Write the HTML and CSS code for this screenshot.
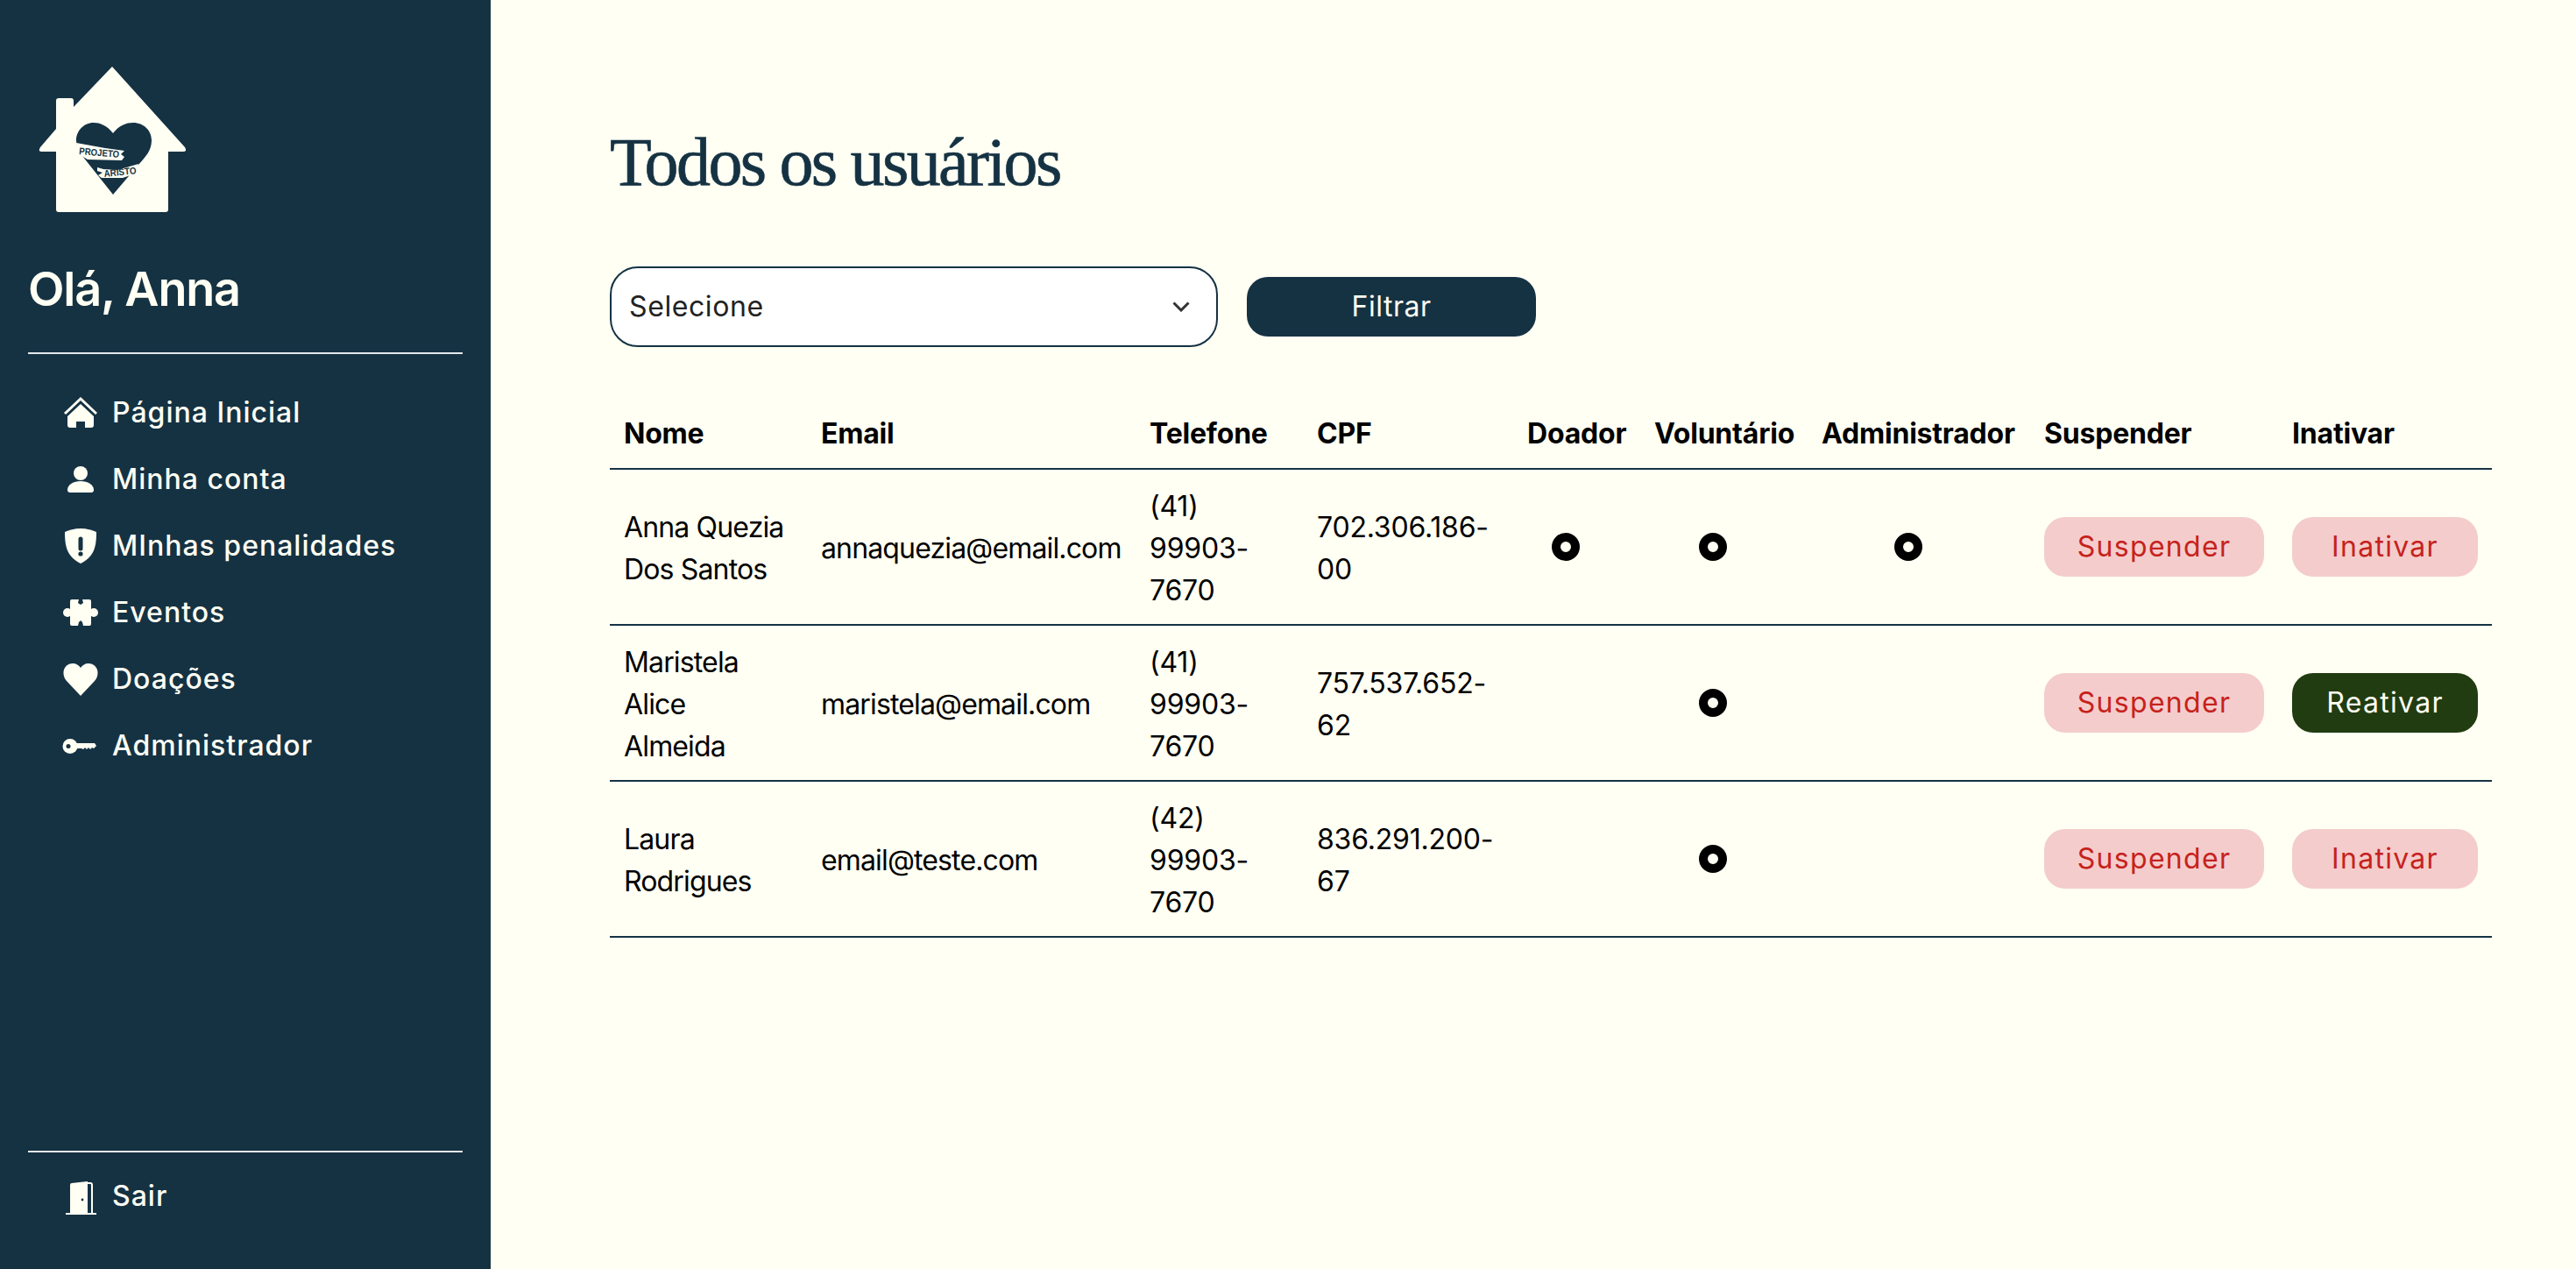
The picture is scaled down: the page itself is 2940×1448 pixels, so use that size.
FILE: index.html
```html
<!DOCTYPE html>
<html lang="pt-BR">
<head>
<meta charset="utf-8">
<title>Todos os usuários</title>
<link rel="stylesheet" href="styles.css">
</head>
<body>
<aside class="sidebar">
  <svg class="logo" viewBox="0 0 168 166" aria-label="Logo">
    <path class="cream" d="M84 0 L167 92 Q170 97 165 97 H148 V163 Q148 166 145 166 H23 Q20 166 20 163 V97 H3 Q-1 97 2 92 L20 71 V39 Q20 36 23 36 H37 Q40 36 40 39 V46 Z"/>
    <path class="navy" d="M85 76 C78 67 70 64 63 64 C51 64 43 74 43 84 C43 94 50 102 58 112 L85 146 L114 112 C122 103 129 96 129 84 C129 73 120 64 108 64 C100 64 92 67 85 76 Z"/>
    <path class="cream" d="M43 87 L76 93 L98 96 L94 100 L98 103 L95 107 L56 106 L44 99 Z"/>
    <path class="cream" d="M67 115 L74 117 L90 118 L114 111 L111 122 L96 127 L72 127 L68 124 L73 121 L67 119 Z"/>
    <text class="logo-text" x="46" y="100" textLength="46" lengthAdjust="spacingAndGlyphs" transform="rotate(5 46 100)">PROJETO</text>
    <text class="logo-text" x="75" y="126" textLength="37" lengthAdjust="spacingAndGlyphs" transform="rotate(-6 75 126)">ARISTO</text>
  </svg>
  <h2 class="greeting">Olá, Anna</h2>
  <nav class="nav">
    <a class="nav-item">
      <svg class="icon" viewBox="0 0 40 40"><path class="roof" d="M2 21 L20 4 L38 21"/><path class="cream" d="M20 10 L35 24 V34 Q35 37 32 37 H25 V30 H15 V37 H8 Q5 37 5 34 V24 Z"/></svg>
      <span>Página Inicial</span>
    </a>
    <a class="nav-item">
      <svg class="icon" viewBox="0 0 40 40"><circle class="cream" cx="20" cy="13" r="8"/><path class="cream" d="M5 32 C5 26 12 22 20 22 C28 22 35 26 35 32 Q35 35 32 35 H8 Q5 35 5 32 Z"/></svg>
      <span>Minha conta</span>
    </a>
    <a class="nav-item">
      <svg class="icon" viewBox="0 0 40 40"><path class="cream" d="M20 0 C27 0 33 2 38 4 C38 20 36 32 20 40 C4 32 2 20 2 4 C7 2 13 0 20 0 Z"/><path class="mark" d="M20 12 V23"/><circle class="navy" cx="20" cy="29" r="2.6"/></svg>
      <span>MInhas penalidades</span>
    </a>
    <a class="nav-item">
      <svg class="icon" viewBox="0 0 40 40"><rect class="cream" x="8" y="5" width="24" height="30" rx="2"/><circle class="cream" cx="5" cy="20" r="5"/><circle class="cream" cx="35" cy="20" r="5"/><path class="navy" d="M18 5 H22 L23 9 L20 11 L17 9 Z"/><path class="navy" d="M17 35 L18 31 L20 29 L22 31 L23 35 Z"/></svg>
      <span>Eventos</span>
    </a>
    <a class="nav-item">
      <svg class="icon" viewBox="0 0 40 40"><path class="cream" d="M20 39 L4 22 C-3 14 1 2 11 2 C15 2 18 4 20 7 C22 4 25 2 29 2 C39 2 43 14 36 22 Z"/></svg>
      <span>Doações</span>
    </a>
    <a class="nav-item">
      <svg class="icon" viewBox="0 0 40 40"><circle class="cream" cx="8" cy="20.5" r="8.5"/><path class="cream" d="M14 17 H36 L38 20 L35 23 L33 22 L31 24 L29 22 L27 24 L25 22 L23 24 L21 23 H14 Z"/><circle class="navy" cx="6" cy="20.5" r="2.5"/></svg>
      <span>Administrador</span>
    </a>
  </nav>
  <div class="sidebar-footer">
    <a class="nav-item">
      <svg class="icon" viewBox="0 0 40 40"><path class="cream" d="M8 7 Q8 5 10 5 L28 3 V39 H8 Z"/><path class="door-frame" d="M28 5 H31 Q33 5 33 7 V40"/><path class="door-floor" d="M3 40 H38"/><circle class="navy" cx="22" cy="24" r="1.4"/></svg>
      <span>Sair</span>
    </a>
  </div>
</aside>
<main class="main">
  <h1 class="title">Todos os usuários</h1>
  <div class="filters">
    <div class="select">
      <span>Selecione</span>
      <svg class="chevron" viewBox="0 0 20 12"><path d="M1.5 1.5 L10 10 L18.5 1.5"/></svg>
    </div>
    <button class="btn btn-filter">Filtrar</button>
  </div>
  <table class="users">
    <colgroup>
      <col class="c-nome"><col class="c-email"><col class="c-tel"><col class="c-cpf"><col class="c-doador"><col class="c-vol"><col class="c-adm"><col class="c-sus"><col class="c-ina">
    </colgroup>
    <thead>
      <tr><th>Nome</th><th>Email</th><th>Telefone</th><th>CPF</th><th>Doador</th><th>Voluntário</th><th>Administrador</th><th>Suspender</th><th>Inativar</th></tr>
    </thead>
    <tbody>
      <tr>
        <td>Anna Quezia Dos Santos</td><td>annaquezia@email.com</td><td class="num">(41) 99903-7670</td><td class="num">702.306.186-00</td>
        <td class="center"><span class="radio"></span></td><td class="center"><span class="radio"></span></td><td class="center"><span class="radio"></span></td>
        <td class="action"><button class="btn btn-danger">Suspender</button></td><td class="action"><button class="btn btn-danger">Inativar</button></td>
      </tr>
      <tr>
        <td>Maristela Alice Almeida</td><td>maristela@email.com</td><td class="num">(41) 99903-7670</td><td class="num">757.537.652-62</td>
        <td class="center"></td><td class="center"><span class="radio"></span></td><td class="center"></td>
        <td class="action"><button class="btn btn-danger">Suspender</button></td><td class="action"><button class="btn btn-ok">Reativar</button></td>
      </tr>
      <tr>
        <td>Laura Rodrigues</td><td>email@teste.com</td><td class="num">(42) 99903-7670</td><td class="num">836.291.200-67</td>
        <td class="center"></td><td class="center"><span class="radio"></span></td><td class="center"></td>
        <td class="action"><button class="btn btn-danger">Suspender</button></td><td class="action"><button class="btn btn-danger">Inativar</button></td>
      </tr>
    </tbody>
  </table>
</main>
</body>
</html>
```
FILE: styles.css
```css
* { box-sizing: border-box; }
html, body { margin: 0; height: 100%; }
body {
  display: flex;
  height: 100vh;
  overflow: hidden;
  background: #fffff3;
  font-family: Inter, "Liberation Sans", sans-serif;
  font-size: 32px;
  line-height: 48px;
  color: #000;
}
.cream { fill: #fffff3; }
.navy { fill: #153243; }

.sidebar {
  flex: 0 0 560px;
  display: flex;
  flex-direction: column;
  padding: 76px 32px 0;
  background: #153243;
  color: #fffff3;
}
.logo { display: block; width: 168px; height: 166px; margin-left: 12px; }
.logo-text { font: 700 11px "Liberation Sans", sans-serif; fill: #153243; }
.greeting {
  margin: 46px 0 0;
  padding-bottom: 30px;
  border-bottom: 2px solid #e5e7eb;
  font-size: 54px;
  line-height: 84px;
  font-weight: 600;
  letter-spacing: -1.2px;
}
.nav { display: flex; flex-direction: column; padding-top: 29px; flex: 1; }
.nav-item {
  display: flex;
  align-items: center;
  gap: 16px;
  height: 76px;
  padding-left: 40px;
  font-weight: 500;
  font-size: 32px;
  letter-spacing: 1px;
}
.icon { flex: 0 0 40px; width: 40px; height: 40px; overflow: visible; }
.roof { fill: none; stroke: #fffff3; stroke-width: 3; }
.mark { fill: none; stroke: #153243; stroke-width: 5; stroke-linecap: round; }
.door-frame { fill: none; stroke: #fffff3; stroke-width: 2; }
.door-floor { fill: none; stroke: #fffff3; stroke-width: 2; }

.sidebar-footer {
  border-top: 2px solid #e5e7eb;
  padding: 12px 0 45px;
}

.main { flex: 1; min-width: 0; padding: 0 96px 0 136px; }
.title {
  margin: 137px 0 0;
  font-family: "Liberation Serif", serif;
  font-size: 78px;
  line-height: 96px;
  font-weight: 400;
  letter-spacing: -2.6px;
  -webkit-text-stroke: 0.7px #153243;
  color: #153243;
}
.filters { display: flex; align-items: center; gap: 33px; margin-top: 71px; }
.select {
  width: 694px;
  height: 92px;
  display: flex;
  align-items: center;
  justify-content: space-between;
  padding: 0 30px 0 20px;
  border: 2px solid #153243;
  border-radius: 32px;
  background: #fff;
  color: #222;
  letter-spacing: 0.6px;
}
.chevron { width: 20px; height: 12px; }
.chevron path { fill: none; stroke: #333; stroke-width: 3; }
.btn {
  display: block;
  border: 0;
  height: 68px;
  width: 100%;
  padding: 0;
  border-radius: 24px;
  font: 400 32px/48px Inter, "Liberation Sans", sans-serif;
  letter-spacing: 1.3px;
}
.btn-filter { width: 330px; background: #153243; color: #fffff3; letter-spacing: 0.5px; }
.btn-danger { background: #f4cccc; color: #c6221c; }
.btn-ok { background: #213c10; color: #fffff3; }

.users {
  width: 100%;
  table-layout: fixed;
  border-collapse: collapse;
  margin-top: 58px;
}
.c-nome { width: 225px; }
.c-email { width: 375px; }
.c-tel { width: 191px; }
.c-cpf { width: 240px; }
.c-doador { width: 145px; }
.c-vol { width: 191px; }
.c-adm { width: 254px; }
.c-sus { width: 283px; }
.c-ina { width: 244px; }
.users th, .users td {
  text-align: left;
  border-bottom: 2px solid #153243;
}
.users th {
  padding: 17px 16px 15px;
  font-weight: 700;
  white-space: nowrap;
  letter-spacing: -0.2px;
}
.users td {
  padding: 18px 16px 14px;
  letter-spacing: -0.85px;
}
.users .num { letter-spacing: -0.2px; }
.users .center, .users .action { padding: 16px; }
.users .center { text-align: center; }
.radio {
  display: inline-block;
  vertical-align: middle;
  width: 32px;
  height: 32px;
  margin: 0 25px 4px 0;
  border: 10px solid #000;
  border-radius: 50%;
  background: #fffff3;
}
```
